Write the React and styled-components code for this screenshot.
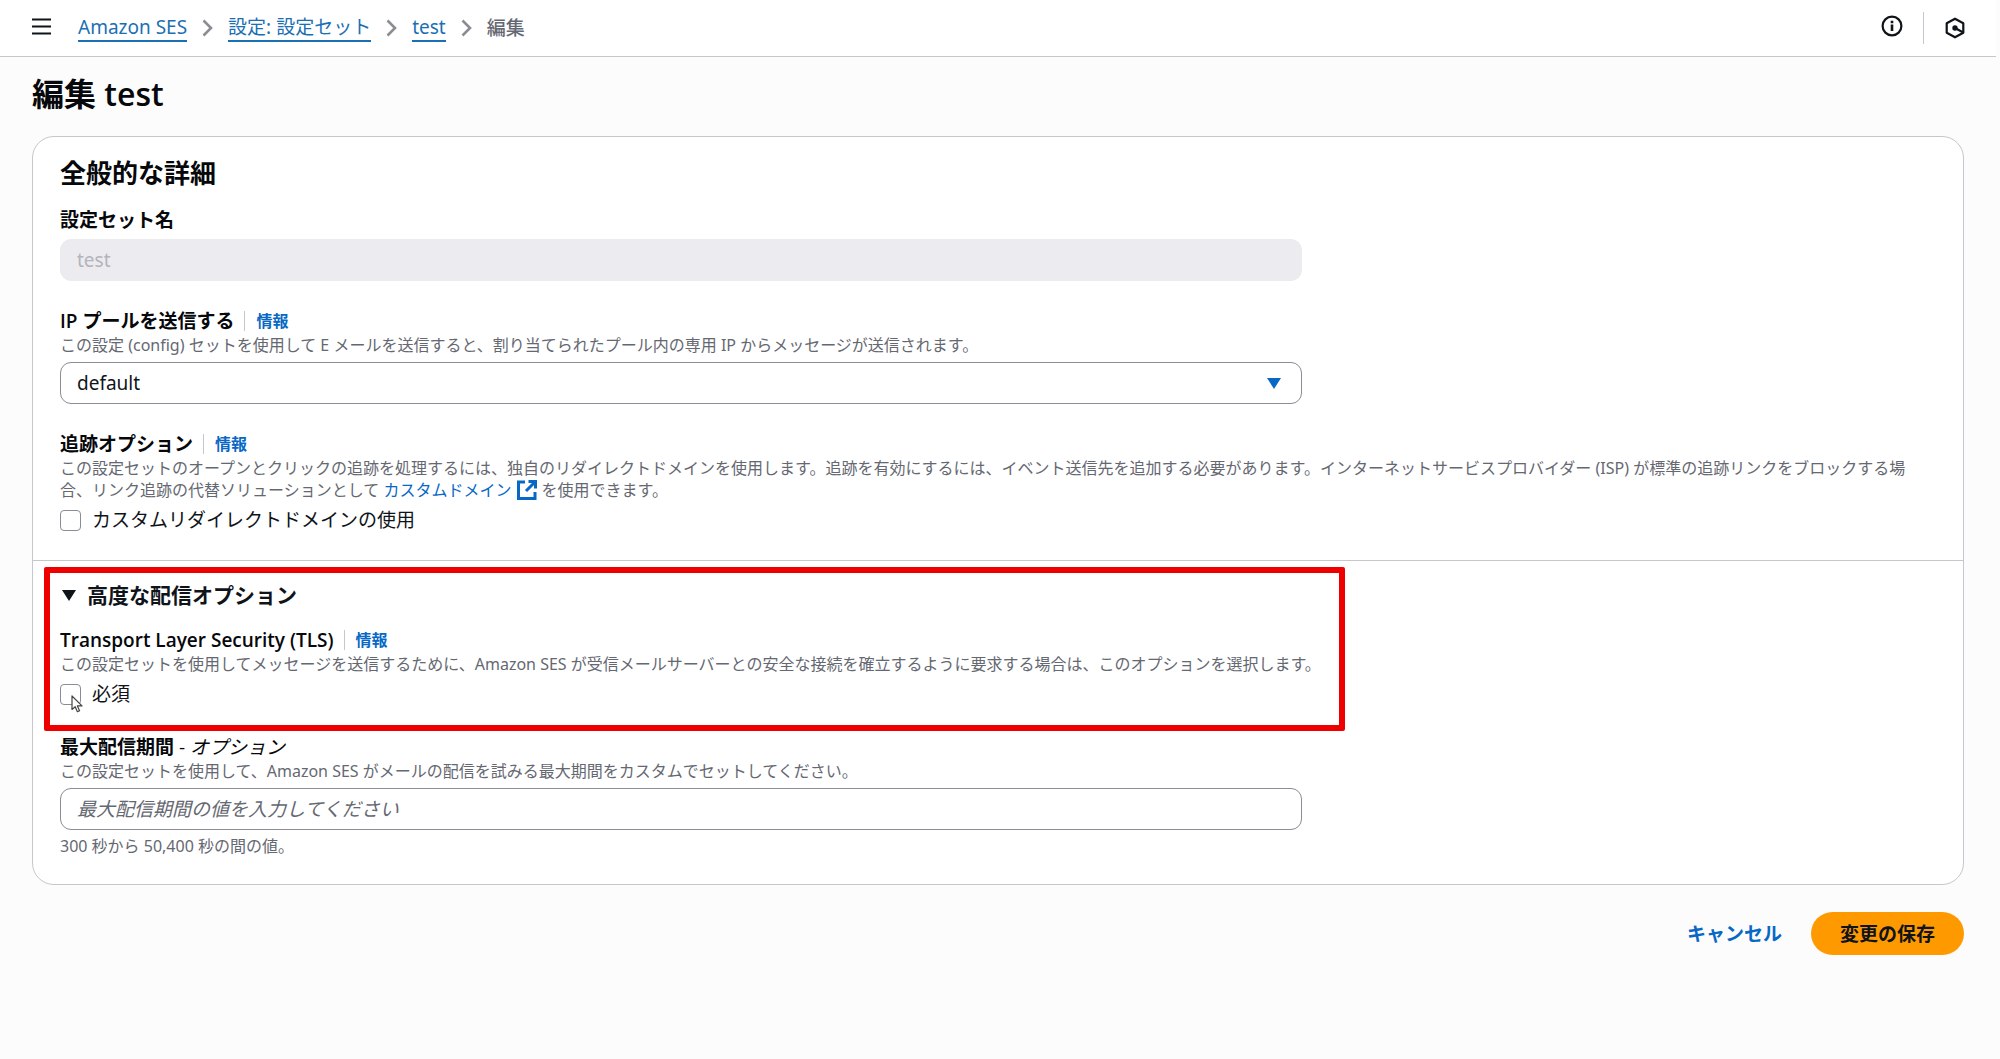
import React from "react";
import styled, { createGlobalStyle } from "styled-components";

const c = {
  page: "#fcfcfc",
  text: "#0f141a",
  heading: "#06080b",
  muted: "#656871",
  link: "#0768c6",
  crumb: "#1b6fb3",
  line: "#c6c6cd",
  control: "#8c8c94",
  disabledBg: "#ebebf0",
  disabledText: "#b4b4bb",
  primary: "#ff9900",
  highlight: "#ee0000",
};

const headingFont = `"Open Sans", "Noto Sans CJK JP", sans-serif`;

const GlobalStyle = createGlobalStyle`
  *, *::before, *::after { box-sizing: border-box; }
  body {
    margin: 0;
    background: ${c.page};
    color: ${c.text};
    font-family: "Noto Sans", "Noto Sans CJK JP", sans-serif;
    font-size: 19px;
    line-height: 26px;
  }
  button, input, select { font: inherit; color: inherit; }
`;

const Page = styled.div`
  padding-right: 4px;
`;

const TopBar = styled.header`
  display: flex;
  align-items: center;
  height: 57px;
  padding: 0 30px 0 32px;
  background: #fff;
  border-bottom: 1px solid ${c.line};
`;

const IconButton = styled.button`
  display: flex;
  padding: 0 0 ${(p) => (p.$raised ? 4 : 0)}px;
  border: 0;
  background: none;
  cursor: pointer;
`;

const Crumbs = styled.ol`
  display: flex;
  align-items: center;
  gap: 15px;
  margin: 0;
  padding: 0;
  list-style: none;
`;

const CrumbNav = styled.nav`
  flex: 1;
  margin-left: 27px;
`;

const Crumb = styled.li`
  display: flex;
  align-items: center;
  gap: 15px;
  color: ${c.muted};
  font-weight: ${(p) => (p.$current ? 500 : 400)};
`;

const CrumbLink = styled.a`
  display: block;
  border-bottom: 2px solid ${c.crumb};
  line-height: 25px;
  color: ${c.crumb};
  text-decoration: none;
`;

const Tools = styled.div`
  display: flex;
  align-items: center;
  gap: 20px;
`;

const ToolDivider = styled.span`
  width: 1px;
  height: 32px;
  background: ${c.line};
`;

const Main = styled.main`
  padding: 17px 32px 32px;
`;

const Title = styled.h1`
  margin: 0 0 22px;
  color: ${c.heading};
  font-family: ${headingFont};
  font-size: 32px;
  line-height: 40px;
  font-weight: 600;
`;

const Card = styled.div`
  background: #fff;
  border: 1px solid ${c.line};
  border-radius: 22px;
`;

const Section = styled.section`
  position: relative;
  display: flex;
  flex-direction: column;
  gap: 27px;
  padding: 20px 27px 27px;

  & + & {
    border-top: 1px solid ${c.line};
  }
`;

const HeadedGroup = styled.div`
  display: flex;
  flex-direction: column;
  gap: 18px;
`;

const SectionTitle = styled.h2`
  margin: 0;
  color: ${c.heading};
  font-size: 26px;
  line-height: 32px;
  font-weight: 700;
`;

const ExpandTitle = styled.h3`
  margin: 0;
  font-size: 21px;
  line-height: 28px;
  font-weight: 700;
`;

const ExpandButton = styled.button`
  display: flex;
  align-items: center;
  gap: 11px;
  padding: 0 2px;
  border: 0;
  background: none;
  cursor: pointer;
`;

const Field = styled.div`
  min-width: 0;
`;

const LabelRow = styled.div`
  display: flex;
  align-items: center;
`;

const Label = styled.label`
  color: ${c.heading};
  font-family: ${headingFont};
  font-weight: 600;
`;

const Optional = styled.span`
  font-weight: 400;
  i { font-style: italic; }
`;

const InfoLink = styled.a`
  margin-left: 10px;
  padding-left: 11px;
  border-left: 1px solid ${c.line};
  color: ${c.link};
  font-size: 16px;
  line-height: 20px;
  font-weight: 700;
  text-decoration: none;
`;

const Hint = styled.p`
  margin: 0;
  color: ${c.muted};
  font-size: 16px;
  line-height: 22px;
`;

const HintLink = styled.a`
  color: ${c.link};
  text-decoration: none;
  svg {
    margin-left: 6px;
    vertical-align: -4px;
  }
`;

const ControlGrid = styled.div`
  display: grid;
  grid-template-columns: repeat(3, minmax(0, 1fr));
  column-gap: 27px;
  margin: 6px 0 ${(p) => (p.$helper ? 5 : 0)}px;

  & > * { grid-column: span 2; }
`;

const Input = styled.input`
  width: 100%;
  height: 42px;
  padding: 0 16px;
  border: 1px solid ${c.control};
  border-radius: 11px;
  background: #fff;
  outline: none;

  &::placeholder {
    color: ${c.muted};
    font-style: italic;
    opacity: 1;
  }
  &:disabled {
    border-color: ${c.disabledBg};
    background: ${c.disabledBg};
    color: ${c.disabledText};
  }
`;

const SelectBox = styled.div`
  position: relative;
  svg {
    position: absolute;
    top: 16px;
    right: 21px;
    pointer-events: none;
  }
`;

const Select = styled.select`
  display: block;
  width: 100%;
  height: 42px;
  padding: 0 48px 0 16px;
  border: 1px solid ${c.control};
  border-radius: 11px;
  background: #fff;
  appearance: none;
`;

const CheckLabel = styled.label`
  position: relative;
  display: inline-flex;
  align-items: center;
  gap: 11px;
  margin-top: 6px;
  vertical-align: top;
`;

const Checkbox = styled.input`
  appearance: none;
  width: 21px;
  height: 21px;
  margin: 0;
  border: 1px solid ${c.control};
  border-radius: 4px;
  background: #fff;

  &:checked {
    border-color: ${c.link};
    background: ${c.link};
  }
`;

const Pointer = styled.svg`
  position: absolute;
  top: 14px;
  left: 11px;
`;

const Highlight = styled.div`
  position: absolute;
  top: 6px;
  left: 11px;
  width: 1301px;
  height: 164px;
  border: 6px solid ${c.highlight};
  border-radius: 2px;
  pointer-events: none;
`;

const Actions = styled.div`
  display: flex;
  justify-content: flex-end;
  gap: 2px;
  margin-top: 27px;
`;

const Button = styled.button`
  height: 43px;
  padding: 0 ${(p) => (p.$primary ? 29 : 27)}px;
  border: 0;
  border-radius: 22px;
  background: ${(p) => (p.$primary ? c.primary : "transparent")};
  color: ${(p) => (p.$primary ? c.text : c.link)};
  font-weight: 700;
  cursor: pointer;
`;

const MenuIcon = () => (
  <svg width="19" height="17" viewBox="0 0 19 17" aria-hidden="true">
    <path d="M0 1.500h19M0 8.500h19M0 15.500h19" stroke={c.text} strokeWidth="2.200" />
  </svg>
);

const ChevronIcon = () => (
  <svg width="11" height="18" viewBox="0 0 11 18" fill="none" aria-hidden="true">
    <path d="M1.500 1.500 9 9l-7.500 7.500" stroke={c.control} strokeWidth="2.600" />
  </svg>
);

const InfoIcon = () => (
  <svg width="22" height="22" viewBox="0 0 22 22" fill="none" aria-hidden="true">
    <circle cx="11" cy="11" r="9.400" stroke={c.text} strokeWidth="2.200" />
    <path d="M11 9.600v6.400M11 5.800v2.400" stroke={c.text} strokeWidth="2.600" />
  </svg>
);

const HexIcon = () => (
  <svg width="22" height="22" viewBox="0 0 22 22" fill="none" aria-hidden="true">
    <path d="M11 1.700 19.300 6.200v9.600L11 20.300 2.700 15.800V6.200z" stroke={c.text} strokeWidth="2.200" strokeLinejoin="round" />
    <circle cx="11" cy="11" r="2.700" fill={c.text} />
    <path d="m11 11 7.800 4.200" stroke={c.text} strokeWidth="2.200" />
  </svg>
);

const CaretIcon = ({ color }) => (
  <svg width="14" height="11" viewBox="0 0 14 11" aria-hidden="true">
    <path d="M0 0h14L7 11z" fill={color} />
  </svg>
);

const ExternalIcon = () => (
  <svg width="20" height="20" viewBox="0 0 20 20" fill="none" aria-hidden="true">
    <path d="M8 2H1.500v16.500H18V12M11.500 1.500h7v7M18.200 1.800 9 11" stroke={c.link} strokeWidth="3" />
  </svg>
);

const Info = () => <InfoLink href="#info">情報</InfoLink>;

export default function App() {
  return (
    <Page>
      <GlobalStyle />
      <TopBar>
        <IconButton $raised aria-label="メニュー"><MenuIcon /></IconButton>
        <CrumbNav>
          <Crumbs>
            <Crumb><CrumbLink href="#ses">Amazon SES</CrumbLink><ChevronIcon /></Crumb>
            <Crumb><CrumbLink href="#sets">設定: 設定セット</CrumbLink><ChevronIcon /></Crumb>
            <Crumb><CrumbLink href="#test">test</CrumbLink><ChevronIcon /></Crumb>
            <Crumb $current aria-current="page">編集</Crumb>
          </Crumbs>
        </CrumbNav>
        <Tools>
          <IconButton $raised aria-label="情報"><InfoIcon /></IconButton>
          <ToolDivider />
          <IconButton aria-label="ツール"><HexIcon /></IconButton>
        </Tools>
      </TopBar>

      <Main>
        <Title>編集 test</Title>
        <Card>
          <Section>
            <HeadedGroup>
              <SectionTitle>全般的な詳細</SectionTitle>
              <Field>
                <LabelRow><Label htmlFor="set-name">設定セット名</Label></LabelRow>
                <ControlGrid><Input id="set-name" defaultValue="test" disabled /></ControlGrid>
              </Field>
            </HeadedGroup>

            <Field>
              <LabelRow><Label htmlFor="pool">IP プールを送信する</Label><Info /></LabelRow>
              <Hint>この設定 (config) セットを使用して E メールを送信すると、割り当てられたプール内の専用 IP からメッセージが送信されます。</Hint>
              <ControlGrid>
                <SelectBox>
                  <Select id="pool" defaultValue="default"><option value="default">default</option></Select>
                  <CaretIcon color={c.link} />
                </SelectBox>
              </ControlGrid>
            </Field>

            <Field>
              <LabelRow><Label htmlFor="redirect">追跡オプション</Label><Info /></LabelRow>
              <Hint>
                この設定セットのオープンとクリックの追跡を処理するには、独自のリダイレクトドメインを使用します。追跡を有効にするには、イベント送信先を追加する必要があります。インターネットサービスプロバイダー (ISP) が標準の追跡リンクをブロックする場合、リンク追跡の代替ソリューションとして{" "}
                <HintLink href="#domain">カスタムドメイン<ExternalIcon /></HintLink>{" "}
                を使用できます。
              </Hint>
              <CheckLabel><Checkbox type="checkbox" id="redirect" />カスタムリダイレクトドメインの使用</CheckLabel>
            </Field>
          </Section>

          <Section>
            <HeadedGroup>
              <ExpandTitle>
                <ExpandButton aria-expanded="true"><CaretIcon color={c.text} />高度な配信オプション</ExpandButton>
              </ExpandTitle>
              <Field>
                <LabelRow><Label htmlFor="tls">Transport Layer Security (TLS)</Label><Info /></LabelRow>
                <Hint>この設定セットを使用してメッセージを送信するために、Amazon SES が受信メールサーバーとの安全な接続を確立するように要求する場合は、このオプションを選択します。</Hint>
                <CheckLabel>
                  <Checkbox type="checkbox" id="tls" />必須
                  <Pointer width="13" height="18" viewBox="0 0 13 18" aria-hidden="true">
                    <path d="M1 1v13.500l3.200-2.800 2.200 5 2.200-1-2.200-4.800H11z" fill="#fff" stroke="#444" strokeWidth="1.200" strokeLinejoin="round" />
                  </Pointer>
                </CheckLabel>
              </Field>
            </HeadedGroup>

            <Field>
              <LabelRow>
                <Label htmlFor="max-time">最大配信期間<Optional> - <i>オプション</i></Optional></Label>
              </LabelRow>
              <Hint>この設定セットを使用して、Amazon SES がメールの配信を試みる最大期間をカスタムでセットしてください。</Hint>
              <ControlGrid $helper><Input id="max-time" placeholder="最大配信期間の値を入力してください" /></ControlGrid>
              <Hint>300 秒から 50,400 秒の間の値。</Hint>
            </Field>
            <Highlight />
          </Section>
        </Card>

        <Actions>
          <Button type="button">キャンセル</Button>
          <Button type="button" $primary>変更の保存</Button>
        </Actions>
      </Main>
    </Page>
  );
}
